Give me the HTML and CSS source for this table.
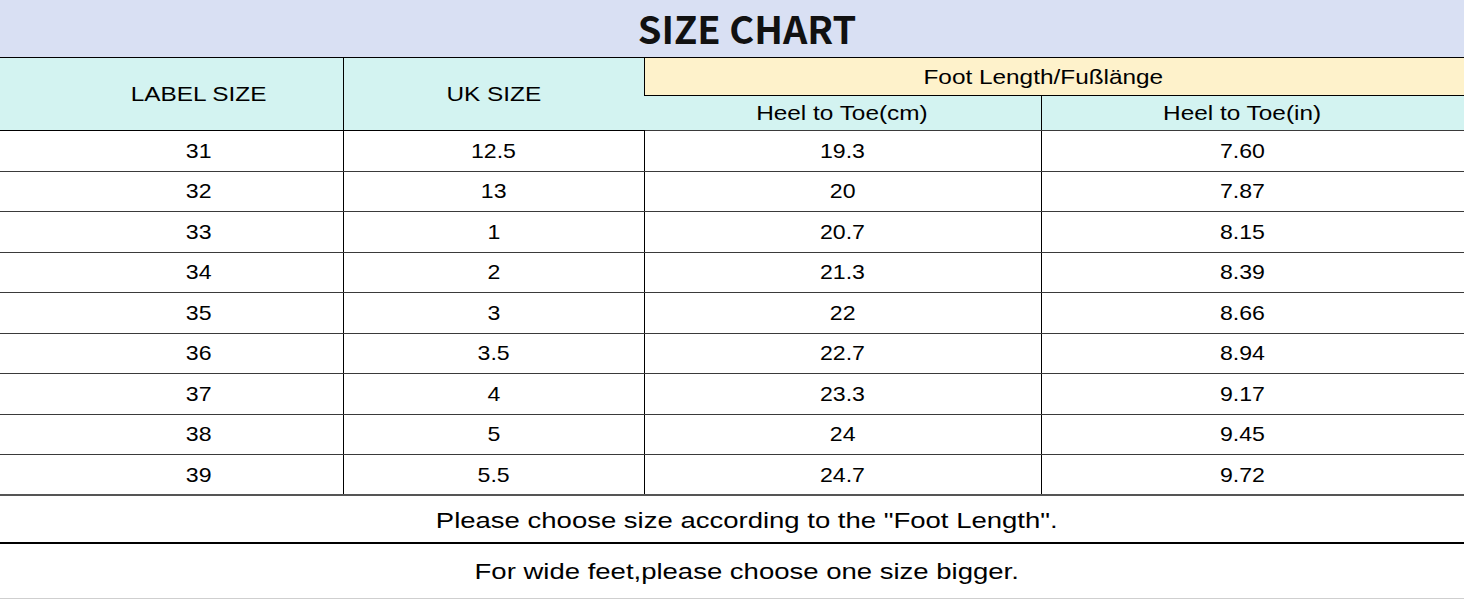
FILE: index.html
```html
<!DOCTYPE html>
<html>
<head>
<meta charset="utf-8">
<link rel="stylesheet" href="styles.css">
</head>
<body>
<div class="title"><span class="title-text">SIZE CHART</span></div>
<table class="chart">
  <colgroup>
    <col class="c1"><col class="c2"><col class="c3"><col class="c4">
  </colgroup>
  <thead>
    <tr class="h1">
      <th rowspan="2" class="cyan first"><span>LABEL SIZE</span></th>
      <th rowspan="2" class="cyan"><span>UK SIZE</span></th>
      <th colspan="2" class="yellow last"><span>Foot Length/Fußlänge</span></th>
    </tr>
    <tr class="h2">
      <th class="cyan"><span>Heel to Toe(cm)</span></th>
      <th class="cyan last"><span>Heel to Toe(in)</span></th>
    </tr>
  </thead>
  <tbody>
    <tr><td class="first"><span>31</span></td><td><span>12.5</span></td><td><span>19.3</span></td><td class="last"><span>7.60</span></td></tr>
    <tr><td class="first"><span>32</span></td><td><span>13</span></td><td><span>20</span></td><td class="last"><span>7.87</span></td></tr>
    <tr><td class="first"><span>33</span></td><td><span>1</span></td><td><span>20.7</span></td><td class="last"><span>8.15</span></td></tr>
    <tr><td class="first"><span>34</span></td><td><span>2</span></td><td><span>21.3</span></td><td class="last"><span>8.39</span></td></tr>
    <tr><td class="first"><span>35</span></td><td><span>3</span></td><td><span>22</span></td><td class="last"><span>8.66</span></td></tr>
    <tr><td class="first"><span>36</span></td><td><span>3.5</span></td><td><span>22.7</span></td><td class="last"><span>8.94</span></td></tr>
    <tr><td class="first"><span>37</span></td><td><span>4</span></td><td><span>23.3</span></td><td class="last"><span>9.17</span></td></tr>
    <tr><td class="first"><span>38</span></td><td><span>5</span></td><td><span>24</span></td><td class="last"><span>9.45</span></td></tr>
    <tr><td class="first"><span>39</span></td><td><span>5.5</span></td><td><span>24.7</span></td><td class="last"><span>9.72</span></td></tr>
    <tr class="note1"><td colspan="4" class="note"><span>Please choose size according to the "Foot Length".</span></td></tr>
    <tr class="note2"><td colspan="4" class="note"><span>For wide feet,please choose one size bigger.</span></td></tr>
  </tbody>
</table>
</body>
</html>
```

FILE: styles.css
```css
html, body {
  margin: 0;
  padding: 0;
  background: #ffffff;
}
body {
  width: 1464px;
  height: 600px;
  overflow: hidden;
  font-family: "Liberation Sans", Arial, sans-serif;
  color: #000;
}
.title {
  height: 57px;
  background: #d9e0f3;
  font-family: "Noto Sans CJK SC", "Noto Sans", sans-serif;
  font-weight: 700;
  font-size: 38px;
  line-height: 55px;
  text-align: center;
  color: #111;
  padding-left: 30px;
  box-sizing: border-box;
}
.title-text {
  display: inline-block;
}
.chart {
  width: 1464px;
  border-collapse: collapse;
  table-layout: fixed;
  border-top: 1px solid #000;
}
.c1 { width: 343px; }
.c2 { width: 301px; }
.c3 { width: 397px; }
.c4 { width: 423px; }
.chart th, .chart td {
  padding: 0;
  text-align: center;
  font-weight: 400;
  font-size: 21px;
  border-left: 1px solid #000;
  border-bottom: 1px solid #3a3a3a;
  white-space: nowrap;
}
.chart th span, .chart td span {
  display: inline-block;
}
.chart th span { transform: scaleX(1.16); }
.chart td span { transform: scaleX(1.1); }
.chart td.note span { transform: scaleX(1.25); }
.chart th:first-child, .chart td:first-child { border-left: none; }
.chart .first { padding-left: 55px; }
.chart .last { padding-right: 21px; }
.cyan { background: #d3f3f1; }
.yellow { background: #fef2cb; }
.chart .h1 th { height: 37px; border-bottom-color: #000; }
.chart .h2 th { height: 34px; }
.chart thead th.cyan[rowspan] { border-bottom-color: #000; }
.chart tbody tr { height: 40.5px; }
.chart tbody tr:nth-child(9) td { border-bottom: 2px solid #555; }
.chart .note1 { height: 48px; }
.chart .note1 td { border-bottom: 2px solid #000; }
.chart .note2 { height: 55px; }
.chart .note2 td { border-bottom: 1px solid #cfcfcf; }
.chart td.note {
  font-size: 22px;
  padding-left: 30px;
  padding-top: 3px;
}
```
